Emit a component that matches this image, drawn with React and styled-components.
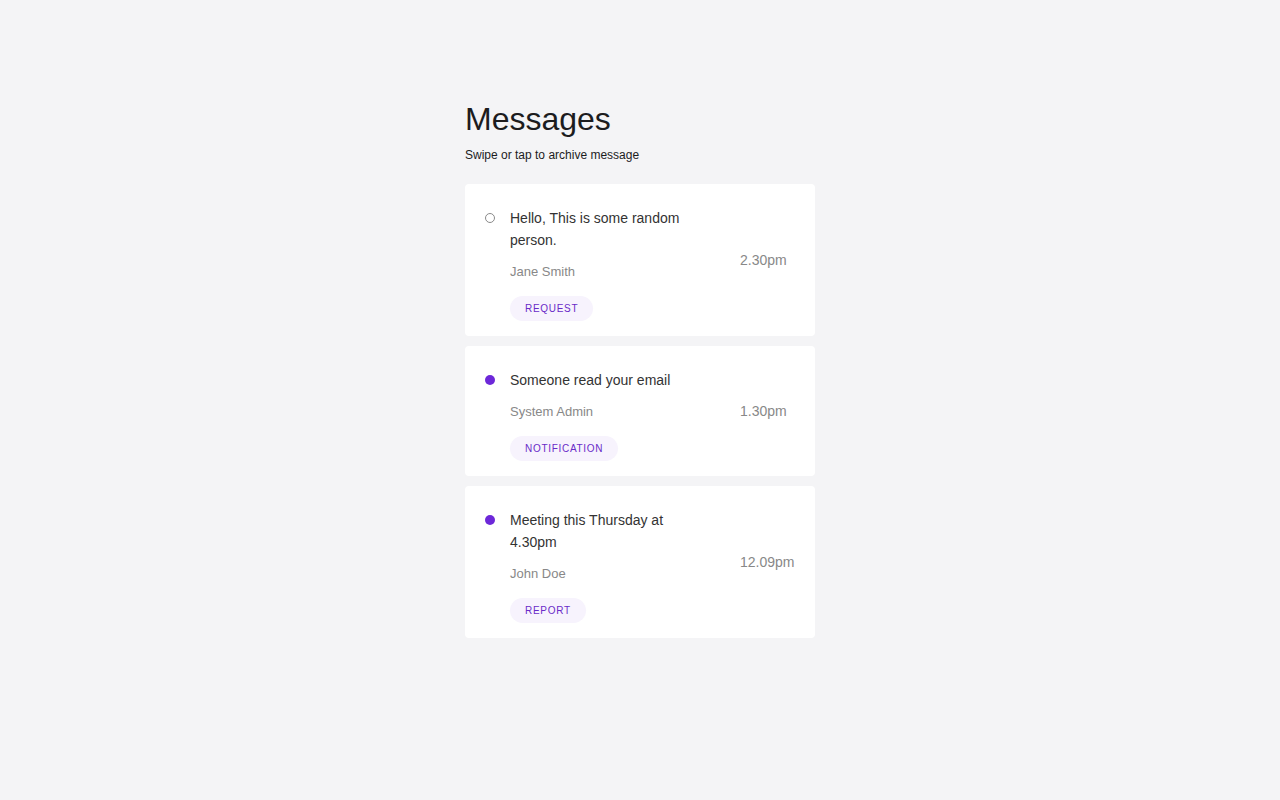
import styled, { createGlobalStyle } from 'styled-components';

const GlobalStyle = createGlobalStyle`
	html, body {
		margin: 0;
		padding: 0;
		background: #f4f4f6;
		font-family: "Liberation Sans", Arial, sans-serif;
	}
`;

const messages = [
	{ id: 1, title: 'Hello, This is some random person.', author: 'Jane Smith', time: '2.30pm', tag: 'Request', read: true },
	{ id: 2, title: 'Someone read your email', author: 'System Admin', time: '1.30pm', tag: 'Notification', read: false },
	{ id: 3, title: 'Meeting this Thursday at 4.30pm', author: 'John Doe', time: '12.09pm', tag: 'Report', read: false },
];

const App = () => {
	return (
		<>
			<GlobalStyle />
			<Page>
				<Wrapper>
					<Heading>Messages</Heading>
					<Subtitle>Swipe or tap to archive message</Subtitle>
					<List>
						{messages.map((m) => (
							<Card key={m.id}>
								<Dot $read={m.read} />
								<Body>
									<Title>{m.title}</Title>
									<Author>{m.author}</Author>
									<Tag>{m.tag}</Tag>
								</Body>
								<Time>{m.time}</Time>
							</Card>
						))}
					</List>
				</Wrapper>
			</Page>
		</>
	);
};

const Page = styled.main`
	min-height: 100vh;
	padding-top: 101px;
	box-sizing: border-box;
`;

const Wrapper = styled.section`
	width: 350px;
	margin: 0 auto;
`;

const Heading = styled.h1`
	margin: 0;
	font-size: 32px;
	font-weight: 400;
	line-height: 37px;
	color: #1c1c1e;
`;

const Subtitle = styled.p`
	margin: 10px 0 0;
	font-size: 12px;
	line-height: 14px;
	color: #1c1c1e;
`;

const List = styled.div`
	margin-top: 22px;
	display: flex;
	flex-direction: column;
	gap: 10px;
`;

const Card = styled.article`
	display: flex;
	align-items: center;
	background: #fff;
	border-radius: 4px;
	padding: 23px 20px 15px;
`;

const Dot = styled.span`
	flex: 0 0 auto;
	align-self: flex-start;
	width: 10px;
	height: 10px;
	margin-top: 6px;
	margin-right: 15px;
	box-sizing: border-box;
	border-radius: 50%;
	background: ${(p) => (p.$read ? 'transparent' : '#6d28d9')};
	border: ${(p) => (p.$read ? '1px solid #8a8a8a' : 'none')};
`;

const Body = styled.div`
	flex: 0 0 190px;
	display: flex;
	flex-direction: column;
	align-items: flex-start;
`;

const Title = styled.div`
	font-size: 14px;
	line-height: 22px;
	color: #333;
`;

const Author = styled.div`
	margin-top: 11px;
	font-size: 13px;
	line-height: 20px;
	color: #888;
`;

const Tag = styled.span`
	margin-top: 14px;
	height: 25px;
	padding: 0 15px;
	display: inline-flex;
	align-items: center;
	border-radius: 13px;
	background: #f7f3fd;
	color: #6a2bc8;
	font-size: 10px;
	letter-spacing: 0.7px;
	text-transform: uppercase;
`;

const Time = styled.div`
	margin-left: 40px;
	margin-bottom: 8px;
	font-size: 14px;
	color: #888;
	white-space: nowrap;
`;

export default App;
